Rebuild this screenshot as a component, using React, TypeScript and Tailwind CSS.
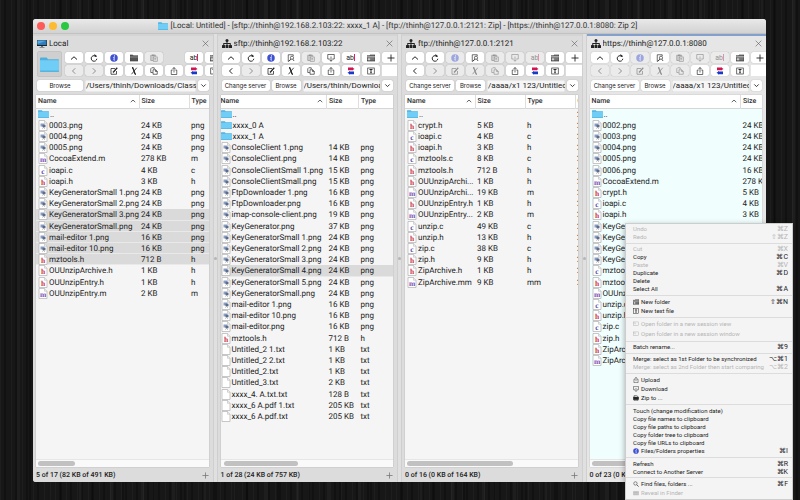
import React from 'react';
import clsx from 'clsx';

type Kind = 'folder' | 'png' | 'm' | 'c' | 'h' | 'txt';

interface FileRow {
  name: string;
  size?: string;
  selected?: boolean;
}

interface PaneData {
  title: string;
  local?: boolean;
  active?: boolean;
  path: string;
  status: string;
  disabled: string[];
  cols: string[];
  headers: string[];
  indent: string;
  thumb: string;
  files: FileRow[];
}

const file = (name: string, size?: string, selected?: boolean): FileRow => ({ name, size, selected });

const panes: PaneData[] = [
  {
    title: 'Local',
    local: true,
    path: '/Users/thinh/Downloads/Class',
    status: '5 of 17 (82 KB of 491 KB)',
    disabled: ['Paste', 'Back', 'Forward'],
    cols: ['w-[103px]', 'w-[50px]', 'w-[21px]'],
    headers: ['Name', 'Size', 'Type'],
    indent: 'pl-[2px]',
    thumb: 'w-[37px] ml-[2px]',
    files: [
      file('..'),
      file('0003.png', '24 KB'),
      file('0004.png', '24 KB'),
      file('0005.png', '24 KB'),
      file('CocoaExtend.m', '278 KB'),
      file('ioapi.c', '4 KB'),
      file('ioapi.h', '3 KB'),
      file('KeyGeneratorSmall 1.png', '24 KB'),
      file('KeyGeneratorSmall 2.png', '24 KB'),
      file('KeyGeneratorSmall 3.png', '24 KB', true),
      file('KeyGeneratorSmall.png', '24 KB', true),
      file('mail-editor 1.png', '16 KB', true),
      file('mail-editor 10.png', '16 KB', true),
      file('mztools.h', '712 B', true),
      file('OUUnzipArchive.h', '1 KB'),
      file('OUUnzipEntry.h', '1 KB'),
      file('OUUnzipEntry.m', '2 KB'),
    ],
  },
  {
    title: 'sftp://thinh@192.168.2.103:22',
    path: '/Users/thinh/Downloa',
    status: '1 of 28 (24 KB of 757 KB)',
    disabled: ['Paste', 'Forward'],
    cols: ['w-[106px]', 'w-[32px]', 'w-[40px]'],
    headers: ['Name', 'Size', 'Type'],
    indent: 'pl-0',
    thumb: 'w-[74px] ml-[3px]',
    files: [
      file('..'),
      file('xxxx_0 A'),
      file('xxxx_1 A'),
      file('ConsoleClient 1.png', '14 KB'),
      file('ConsoleClient.png', '14 KB'),
      file('ConsoleClientSmall 1.png', '15 KB'),
      file('ConsoleClientSmall.png', '15 KB'),
      file('FtpDownloader 1.png', '16 KB'),
      file('FtpDownloader.png', '16 KB'),
      file('imap-console-client.png', '19 KB'),
      file('KeyGenerator.png', '37 KB'),
      file('KeyGeneratorSmall 1.png', '24 KB'),
      file('KeyGeneratorSmall 2.png', '24 KB'),
      file('KeyGeneratorSmall 3.png', '24 KB'),
      file('KeyGeneratorSmall 4.png', '24 KB', true),
      file('KeyGeneratorSmall 5.png', '24 KB'),
      file('KeyGeneratorSmall.png', '24 KB'),
      file('mail-editor 1.png', '16 KB'),
      file('mail-editor 10.png', '16 KB'),
      file('mail-editor.png', '16 KB'),
      file('mztools.h', '712 B'),
      file('Untitled_2 1.txt', '1 KB'),
      file('Untitled_2 2.txt', '1 KB'),
      file('Untitled_2.txt', '1 KB'),
      file('Untitled_3.txt', '2 KB'),
      file('xxxx_4. A.txt.txt', '128 B'),
      file('xxxx_6 A.pdf 1.txt', '205 KB'),
      file('xxxx_6 A.pdf.txt', '205 KB'),
    ],
  },
  {
    title: 'ftp://thinh@127.0.0.1:2121',
    path: '/aaaa/x1 123/Untitled_',
    status: '0 of 16 (0 KB of 164 KB)',
    disabled: ['Info', 'Paste', 'Download', 'Rename', 'Forward', 'Edit', 'Delete', 'Copy'],
    cols: ['w-[70px]', 'w-[50px]', 'w-[50px]', 'w-[20px]'],
    headers: ['Name', 'Size', 'Type', 'C'],
    indent: 'pl-[2px]',
    thumb: 'w-[106px] ml-[2px]',
    files: [
      file('..'),
      file('crypt.h', '5 KB'),
      file('ioapi.c', '4 KB'),
      file('ioapi.h', '3 KB'),
      file('mztools.c', '8 KB'),
      file('mztools.h', '712 B'),
      file('OUUnzipArchi...h', '1 KB'),
      file('OUUnzipArchi...m', '19 KB'),
      file('OUUnzipEntry.h', '1 KB'),
      file('OUUnzipEntry...m', '2 KB'),
      file('unzip.c', '49 KB'),
      file('unzip.h', '13 KB'),
      file('zip.c', '38 KB'),
      file('zip.h', '9 KB'),
      file('ZipArchive.h', '1 KB'),
      file('ZipArchive.mm', '9 KB'),
    ],
  },
  {
    title: 'https://thinh@127.0.0.1:8080',
    active: true,
    path: '/aaaa/x1 123/Untitled_',
    status: '0 of 23 (0 KB of 512 KB)',
    disabled: ['Info', 'Paste', 'Download', 'Rename', 'Back', 'Forward', 'Edit', 'Delete', 'Copy'],
    cols: ['w-[151px]', 'w-[40px]'],
    headers: ['Name', 'Size'],
    indent: 'pl-[2px]',
    thumb: 'w-[106px] ml-[2px]',
    files: [
      file('..'),
      file('0002.png', '24 KB'),
      file('0003.png', '24 KB'),
      file('0004.png', '24 KB'),
      file('0005.png', '24 KB'),
      file('0006.png', '16 KB'),
      file('CocoaExtend.m', '278 KB'),
      file('crypt.h', '5 KB'),
      file('ioapi.c', '4 KB'),
      file('ioapi.h', '3 KB'),
      file('KeyGeneratorSmall 1.png', '24 KB'),
      file('KeyGeneratorSmall 2.png', '24 KB'),
      file('KeyGeneratorSmall 3.png', '24 KB'),
      file('KeyGeneratorSmall.png', '24 KB'),
      file('mztools.c', '8 KB'),
      file('mztools.h', '712 B'),
      file('OUUnzipEntry.m', '2 KB'),
      file('unzip.c', '49 KB'),
      file('unzip.h', '13 KB'),
      file('zip.c', '38 KB'),
      file('zip.h', '9 KB'),
      file('ZipArchive.h', '1 KB'),
      file('ZipArchive.mm', '9 KB'),
    ],
  },
];

const extOf = (row: FileRow) => (row.size ? row.name.split('.').pop() ?? '' : '');

// long names are stored as "stem...ext", the list shows only the stem and dots
const labelOf = (row: FileRow) => row.name.replace(/\.\.\.\w+$/, '...');

const kindOf = (row: FileRow): Kind => {
  const ext = extOf(row);
  if (!ext) return 'folder';
  return (ext === 'mm' ? 'm' : ext) as Kind;
};

function Folder({ className }: { className?: string }) {
  return (
    <svg viewBox="0 0 20 16" className={clsx('shrink-0', className)} preserveAspectRatio="none">
      <path d="M0 1.5Q0 .5 1 .5h6l1.5 2H19q1 0 1 1V15q0 1-1 1H1q-1 0-1-1z" fill="#4fb0dc" />
      <path d="M0 3.5h20V15q0 1-1 1H1q-1 0-1-1z" fill="#6fcdf6" />
      <path d="M0 14.5h20v.5q0 1-1 1H1q-1 0-1-1z" fill="#57b4df" />
    </svg>
  );
}

function FileIcon({ kind }: { kind: Kind }) {
  if (kind === 'folder') return <Folder className="h-[8px] w-[11px]" />;
  return (
    <svg viewBox="0 0 20 22" className="h-[11px] w-[10px] shrink-0">
      <path d="M2 1h11l5 5.500V21H2z" fill="#fff" stroke="#b0b0b0" strokeWidth="1.400" />
      <path d="M13 1v5.500h5" fill="#eee" stroke="#b0b0b0" />
      {kind === 'png' && (
        <>
          <rect x="5" y="7" width="8" height="6" fill="#8b9fc4" />
          <rect x="9" y="9.500" width="6" height="5" fill="#5d6c8a" />
          <path d="M9 17l2-2 3 2" stroke="#8a8a8a" strokeWidth="1.500" fill="none" />
        </>
      )}
      {(kind === 'm' || kind === 'c' || kind === 'h') && (
        <text
          x="10"
          y="17"
          textAnchor="middle"
          fontFamily="Liberation Serif, serif"
          fontWeight="bold"
          fontSize="15"
          fill={kind === 'h' ? '#c8354a' : kind === 'c' ? '#5a4aa8' : '#7a52b8'}
        >
          {kind}
        </text>
      )}
    </svg>
  );
}

const glyphs: Record<string, React.ReactNode> = {
  Up: <path d="M2 11l6-5.500 6 5.500" strokeWidth="2" />,
  Back: <path d="M10.500 2.500L5 8l5.500 5.500" strokeWidth="2" />,
  Forward: <path d="M5.500 2.500L11 8l-5.500 5.500" strokeWidth="2" />,
  Reload: (
    <>
      <path d="M12.800 6A5.600 5.600 0 1 0 13.600 9.500" strokeWidth="1.900" />
      <path d="M8.500 0l1 5.500 5-1z" fill="currentColor" stroke="none" />
    </>
  ),
  Info: (
    <>
      <circle cx="8" cy="8" r="7.500" fill="#3f51d0" stroke="none" />
      <path d="M6.300 6.800h2.400l-1 5.400h2" stroke="#fff" strokeWidth="1.600" />
      <circle cx="9" cy="3.900" r="1.200" fill="#fff" stroke="none" />
    </>
  ),
  Open: (
    <>
      <path d="M0 2h5.500L7 3.500h9V14H0z" fill="#555" stroke="#444" />
      <path d="M0 6h16" stroke="#aaa" />
    </>
  ),
  Search: (
    <>
      <path d="M2.500 15V1.500h10V4M2.500 15l3.500-3" />
      <circle cx="10" cy="7.500" r="3.200" />
      <path d="M8 10l-4 4.500M12 10.500l2 3.500" strokeWidth="1.500" />
    </>
  ),
  Paste: (
    <>
      <path d="M6 13H1.500V2.500h10V5" fill="#aaa" />
      <path d="M4 2.500h5" strokeWidth="2.500" />
      <rect x="6.500" y="6" width="8" height="8.500" fill="#eee" />
      <path d="M8.500 9h4M8.500 11.500h4" />
    </>
  ),
  Download: (
    <>
      <path d="M5.500 10h-4V1h13v9h-4" />
      <path d="M8 5v9.500M5 11.500l3 3 3-3" />
    </>
  ),
  Edit: (
    <>
      <path d="M10 3H2v11.500h11V8" strokeWidth="1.500" />
      <path d="M6 11L14.500 1.500" strokeWidth="2.500" />
    </>
  ),
  Delete: (
    <>
      <path d="M4 1.500q2 0 2.500 2l3 9q.5 2 2.500 2" strokeWidth="2.600" />
      <path d="M13.500 1.500L3 14.500" strokeWidth="1.600" />
    </>
  ),
  Copy: (
    <>
      <path d="M5.500 11h-4V3.500l2-2h5V4" />
      <path d="M6 14.500V5.500h5.500l3 3v6z" />
      <path d="M11 5.500V9h3.500" />
    </>
  ),
  Upload: (
    <>
      <path d="M5.500 6h-3v9h11V6h-3" />
      <path d="M8 11V1M5 4l3-3 3 3" />
    </>
  ),
  Merge: (
    <>
      <path d="M2 1h10v5.500H2z" fill="#d4144f" stroke="none" />
      <path d="M11 1l4 2.800-4 2.700z" fill="#d4144f" stroke="none" />
      <path d="M4 9h10v5.500H4z" fill="#1739c8" stroke="none" />
      <path d="M6 8.500L1 11.700 6 15z" fill="#1739c8" stroke="none" />
    </>
  ),
  'New folder': (
    <>
      <path d="M0 14V3.500h5l1-1.500h10v12z" fill="#777" stroke="#333" />
      <path d="M0 5.500h16" stroke="#ddd" />
      <path d="M4 8v5M1.500 10.500h5" stroke="#fff" />
    </>
  ),
  'New text file': (
    <>
      <rect x="1.500" y="2" width="13" height="12" />
      <path d="M5 5h6M8 5v6.500M6.500 11.500h3" strokeWidth="1.900" />
    </>
  ),
  Add: <path d="M8 1v14M1 8h14" strokeWidth="1.800" />,
  Close: <path d="M1.500 1.500l13 13M14.500 1.500l-13 13" />,
  Caret: <path d="M3 5.500l5 5 5-5" strokeWidth="2" />,
  Window: (
    <>
      <rect x="1" y="2.500" width="14" height="10" />
      <path d="M1 5h5v4" />
    </>
  ),
  Zip: (
    <>
      <path d="M3 6V1.500h7L13 4v2M3 12v3h10v-3" />
      <rect x="1" y="5.500" width="14" height="7" fill="currentColor" />
    </>
  ),
  Find: (
    <>
      <circle cx="6.500" cy="6.500" r="4.500" />
      <path d="M10 10l5 5" strokeWidth="1.800" />
    </>
  ),
  Finder: <path d="M1 4h14v9H1zM1 7h14M5 4v9M10 4v9" fill="#ccc" />,
};

function Glyph({ name, className = 'size-2' }: { name: string; className?: string }) {
  return (
    <svg viewBox="0 0 16 16" className={clsx('shrink-0', className)} fill="none" stroke="currentColor" strokeWidth="1.300">
      {glyphs[name]}
    </svg>
  );
}

function ToolButton({ name, disabled }: { name: string; disabled?: boolean }) {
  return (
    <button
      aria-label={name}
      disabled={disabled}
      className={clsx(
        'flex h-[11px] w-[18px] shrink-0 items-center justify-center rounded-[2px] text-[#222] shadow-[0_0_1px_rgba(0,0,0,0.35)]',
        disabled ? 'bg-[#ebebeb]' : 'bg-white',
      )}
    >
      <span className={clsx('flex items-center', disabled && 'opacity-45')}>
        {name === 'Rename' ? (
          <span className="flex items-center text-[7px] leading-[8px]">
            ab<span className="h-[7px] w-px bg-[#e0205a]" />
          </span>
        ) : (
          <Glyph name={name} />
        )}
      </span>
    </button>
  );
}

function TextButton({ label, className }: { label: string; className?: string }) {
  return (
    <button
      className={clsx(
        "h-[11px] shrink-0 rounded-[2px] bg-white font-['Inter','Liberation_Sans',sans-serif] text-[6px] leading-[11px] whitespace-nowrap shadow-[0_0_1px_rgba(0,0,0,0.35)]",
        className,
      )}
    >
      {label}
    </button>
  );
}

function Toolbar({ pane }: { pane: PaneData }) {
  const top = ['Up', 'Reload', 'Info', pane.local ? 'Open' : 'Search', 'Paste', 'Download', 'Rename', 'New folder', 'Add'];
  const bottom = ['Back', 'Forward', 'Edit', 'Delete', 'Copy', 'Upload', 'Merge', 'New text file'];
  return (
    <div className="flex gap-[3px] overflow-hidden pb-[2px] pl-[4px]">
      {pane.local && (
        <button
          aria-label="Current folder"
          className="flex h-[26px] w-[25px] shrink-0 items-center justify-center rounded-[2px] border border-[#c4c4c4] bg-[#cfcfcf]"
        >
          <Folder className="h-[15px] w-[19px]" />
        </button>
      )}
      <div className="flex flex-col gap-[2px] pt-px pb-px">
        <div className="flex gap-[2px]">
          {top.map((name) =>
            pane.local && name === 'Download' ? (
              <span key={name} className="w-[18px] shrink-0" />
            ) : (
              <ToolButton key={name} name={name} disabled={pane.disabled.includes(name)} />
            ),
          )}
        </div>
        <div className="flex gap-[2px]">
          {bottom.map((name) => (
            <ToolButton key={name} name={name} disabled={pane.disabled.includes(name)} />
          ))}
          <span className="h-[11px] w-[18px] shrink-0 bg-white" />
        </div>
      </div>
    </div>
  );
}

function FileTable({ pane }: { pane: PaneData }) {
  return (
    <table className="w-px table-fixed border-collapse text-left">
      <thead>
        <tr className="h-[13px] border-b border-[#d6d6d6] bg-white">
          {pane.headers.map((header, i) => (
            <th
              key={header}
              className={clsx(
                'p-0 text-[7px] leading-[12px] font-medium text-[#333]',
                pane.cols[i],
                i === 0 ? pane.indent : 'border-l border-[#dedede] pl-[2px]',
              )}
            >
              <span className="flex items-center justify-between">
                {header}
                {i === 0 && <Glyph name="Up" className="mr-[3px] size-[6px]" />}
              </span>
            </th>
          ))}
        </tr>
      </thead>
      <tbody>
        {pane.files.map((row, i) => (
          <tr
            key={i}
            className={clsx(
              'h-[11px] nth-[5n]:h-[12px]',
              row.selected && 'bg-[#dadada] shadow-[inset_0_-1px_0_#e9e9e9]',
            )}
          >
            <td className={clsx('p-0', pane.indent)}>
              <div className="flex h-[11px] items-center gap-px">
                <FileIcon kind={kindOf(row)} />
                <span className="text-[8px] leading-[11px] whitespace-nowrap">{labelOf(row)}</span>
              </div>
            </td>
            {pane.headers.slice(1).map((header) => (
              <td key={header} className="p-0 pl-[2px] text-[8px] leading-[11px] whitespace-nowrap">
                {header === 'Size' && row.size}
                {header === 'Type' && extOf(row)}
                {header === 'C' && '2'}
              </td>
            ))}
          </tr>
        ))}
      </tbody>
    </table>
  );
}

function Pane({ pane }: { pane: PaneData }) {
  return (
    <section
      className={clsx(
        'flex min-w-0 flex-1 flex-col overflow-hidden border-t-2',
        pane.active ? 'border-[#84a0cc] bg-[#e6e6e6]' : 'border-[#d4d4d4] bg-[#dcdcdc]',
      )}
    >
      <header className="flex h-[15px] items-center gap-[2px] pr-[4px] pl-[4px]">
        {pane.local ? (
          <svg viewBox="0 0 20 16" className="h-[8px] w-[10px]">
            <rect width="20" height="12" rx="1" fill="#222" />
            <rect x="1" y="1" width="18" height="9" fill="#2b7fc0" />
            <path d="M1 1h18L1 8z" fill="#58a8dc" />
            <path d="M8 12h4v2h3v1.500H5V14h3z" fill="#777" />
          </svg>
        ) : (
          <svg viewBox="0 0 20 18" className="h-[9px] w-[10px]" fill="#222">
            <circle cx="10" cy="3" r="3" />
            <path d="M9 5h2v3h6.500v5h-2v-3H11v3H9v-3H4.500v3h-2V8H9z" />
            <rect y="12" width="6" height="6" rx="1" />
            <rect x="7" y="12" width="6" height="6" rx="1" />
            <rect x="14" y="12" width="6" height="6" rx="1" />
          </svg>
        )}
        <h2 className="flex-1 truncate text-[8px] leading-[12px]">{pane.title}</h2>
        <button aria-label={'Close ' + pane.title} className="flex text-[#555]">
          <Glyph name="Close" className="size-[7px]" />
        </button>
      </header>
      <Toolbar pane={pane} />
      <div className="flex gap-[2px] pt-px pr-[4px] pl-[4px]">
        {pane.local ? (
          <TextButton label="Browse" className="w-[46px]" />
        ) : (
          <>
            <TextButton label="Change server" className="w-[48px]" />
            <TextButton label="Browse" className="w-[29px]" />
          </>
        )}
        <input
          aria-label={'Path of ' + pane.title}
          defaultValue={pane.path}
          className="h-[12px] min-w-0 flex-1 bg-[#f6f6f6] pl-px text-[8px] leading-[12px] shadow-[inset_0_0_1px_rgba(0,0,0,0.5)]"
        />
        <button
          aria-label="Recent paths"
          className="flex h-[11px] w-[11px] shrink-0 items-center justify-center rounded-[2px] bg-white shadow-[0_0_1px_rgba(0,0,0,0.35)]"
        >
          <Glyph name="Caret" className="size-[7px]" />
        </button>
      </div>
      <div
        className={clsx(
          'mt-[3px] mr-[4px] ml-[3px] flex min-h-0 flex-1 flex-col overflow-hidden shadow-[0_0_1px_rgba(0,0,0,0.3)]',
          pane.active ? 'bg-[#f0fefe]' : 'bg-[#f5f5f5]',
        )}
      >
        <div className="min-h-0 flex-1 overflow-hidden bg-[linear-gradient(#fff,#fff)] bg-[length:100%_12px] bg-no-repeat">
          <FileTable pane={pane} />
        </div>
        <div className="flex h-[8px] items-center border-t border-[#e6e6e6] bg-[#fafafa]">
          <div className={clsx('h-[5px] rounded-full bg-[#c1c1c1]', pane.thumb)} />
        </div>
      </div>
      <footer className="flex h-[15px] items-center justify-between pt-px pr-[4px] pl-[3px] text-[7px] leading-[10px] font-medium">
        <span className="whitespace-nowrap">{pane.status}</span>
        <button aria-label="Add view" className="flex text-[#777]">
          <Glyph name="Add" className="size-[7px]" />
        </button>
      </footer>
    </section>
  );
}

interface MenuItem {
  label: string;
  keys?: string;
  off?: boolean;
  icon?: string;
}

const menu: MenuItem[][] = [
  [
    { label: 'Undo', keys: '⌘Z', off: true },
    { label: 'Redo', keys: '⇧⌘Z', off: true },
  ],
  [
    { label: 'Cut', keys: '⌘X', off: true },
    { label: 'Copy', keys: '⌘C' },
    { label: 'Paste', keys: '⌘V', off: true },
    { label: 'Duplicate', keys: '⌘D' },
    { label: 'Delete' },
    { label: 'Select All', keys: '⌘A' },
  ],
  [
    { label: 'New folder', keys: '⇧⌘N', icon: 'New folder' },
    { label: 'New text file', icon: 'New text file' },
  ],
  [
    { label: 'Open folder in a new session view', off: true, icon: 'Window' },
    { label: 'Open folder in a new session window', off: true, icon: 'Window' },
  ],
  [{ label: 'Batch rename...', keys: '⌘9' }],
  [
    { label: 'Merge: select as 1st Folder to be synchronized', keys: '⌥⌘1' },
    { label: 'Merge: select as 2nd Folder then start comparing', keys: '⌥⌘2', off: true },
  ],
  [
    { label: 'Upload', icon: 'Upload' },
    { label: 'Download', icon: 'Download' },
    { label: 'Zip to ...', icon: 'Zip' },
  ],
  [
    { label: 'Touch (change modification date)' },
    { label: 'Copy file names to clipboard' },
    { label: 'Copy file paths to clipboard' },
    { label: 'Copy folder tree to clipboard' },
    { label: 'Copy file URLs to clipboard' },
    { label: 'Files/Folders properties', keys: '⌘I', icon: 'Info' },
  ],
  [
    { label: 'Refresh', keys: '⌘R' },
    { label: 'Connect to Another Server', keys: '⌘K' },
  ],
  [
    { label: 'Find files, folders ...', keys: '⌘F', icon: 'Find' },
    { label: 'Reveal in Finder', off: true, icon: 'Finder' },
  ],
];

function ContextMenu() {
  return (
    <div
      role="menu"
      className="absolute top-[223px] right-[7px] bottom-0 flex w-[168px] flex-col justify-between border border-[#cdcdcd] bg-[#f4f4f4] py-px shadow-[0_2px_6px_rgba(0,0,0,0.35)]"
    >
      {menu.map((group, i) => (
        <React.Fragment key={i}>
          {i > 0 && <hr className="border-[#dcdcdc]" />}
          <div>
            {group.map((item) => (
              <button
                key={item.label}
                role="menuitem"
                disabled={item.off}
                className={clsx(
                  'flex w-full items-center gap-[2px] pr-[4px] pl-[7px] text-[6px] leading-[8px] whitespace-nowrap',
                  item.icon === 'Window' ? 'h-[10px]' : item.icon ? 'h-[9px]' : 'h-[8px]',
                  item.off ? 'text-[#b4b4b4]' : 'text-[#222]',
                )}
              >
                {item.icon && <Glyph name={item.icon} className="size-[6px]" />}
                <span className="flex-1 text-left">{item.label}</span>
                <span className="text-[7px]">{item.keys}</span>
              </button>
            ))}
          </div>
        </React.Fragment>
      ))}
    </div>
  );
}

function App() {
  return (
    <div className="relative flex h-screen overflow-hidden bg-[#171717] bg-[repeating-linear-gradient(90deg,rgba(255,255,255,0.03)_0_1px,transparent_1px_4px,rgba(0,0,0,0.25)_4px_6px,transparent_6px_11px),repeating-linear-gradient(90deg,transparent_0_17px,rgba(255,255,255,0.03)_17px_20px,transparent_20px_29px,rgba(0,0,0,0.25)_29px_31px)] pt-[19px] pr-[34px] pb-[18px] pl-[33px] font-['Roboto','Liberation_Sans',sans-serif] text-[#222] [text-rendering:geometricPrecision]">
      <main className="flex min-w-0 flex-1 flex-col overflow-hidden rounded-[3px] bg-[#dcdcdc]">
        <div className="flex h-[15px] items-center border-b border-[#c2c2c2] bg-linear-to-b from-[#e9e9e9] to-[#d2d2d2] px-[4px]">
          <div className="flex gap-[4px]">
            <button aria-label="Close window" className="size-[8px] rounded-full bg-[#fc5b57]" />
            <button aria-label="Minimize window" className="size-[8px] rounded-full bg-[#fdbc2f]" />
            <button aria-label="Zoom window" className="size-[8px] rounded-full bg-[#28c940]" />
          </div>
          <h1 className="flex flex-1 items-center justify-center gap-[3px] pr-[36px] text-[8px] leading-[12px] whitespace-nowrap text-[#333]">
            <Folder className="h-[8px] w-[10px]" />
            [Local: Untitled] - [sftp://thinh@192.168.2.103:22: xxxx_1 A] - [ftp://thinh@127.0.0.1:2121: Zip] - [https://thinh@127.0.0.1:8080: Zip 2]
          </h1>
        </div>
        <div className="flex min-h-0 flex-1">
          {panes.map((pane, i) => (
            <React.Fragment key={pane.title}>
              {i > 0 && (
                <div className="flex w-[5px] shrink-0 items-center justify-center border-x border-[#cfcfcf] bg-[#e0e0e0]">
                  <span className="size-[3px] rounded-full bg-[#b5b5b5]" />
                </div>
              )}
              <Pane pane={pane} />
            </React.Fragment>
          ))}
        </div>
      </main>
      <ContextMenu />
    </div>
  );
}

export default App;
